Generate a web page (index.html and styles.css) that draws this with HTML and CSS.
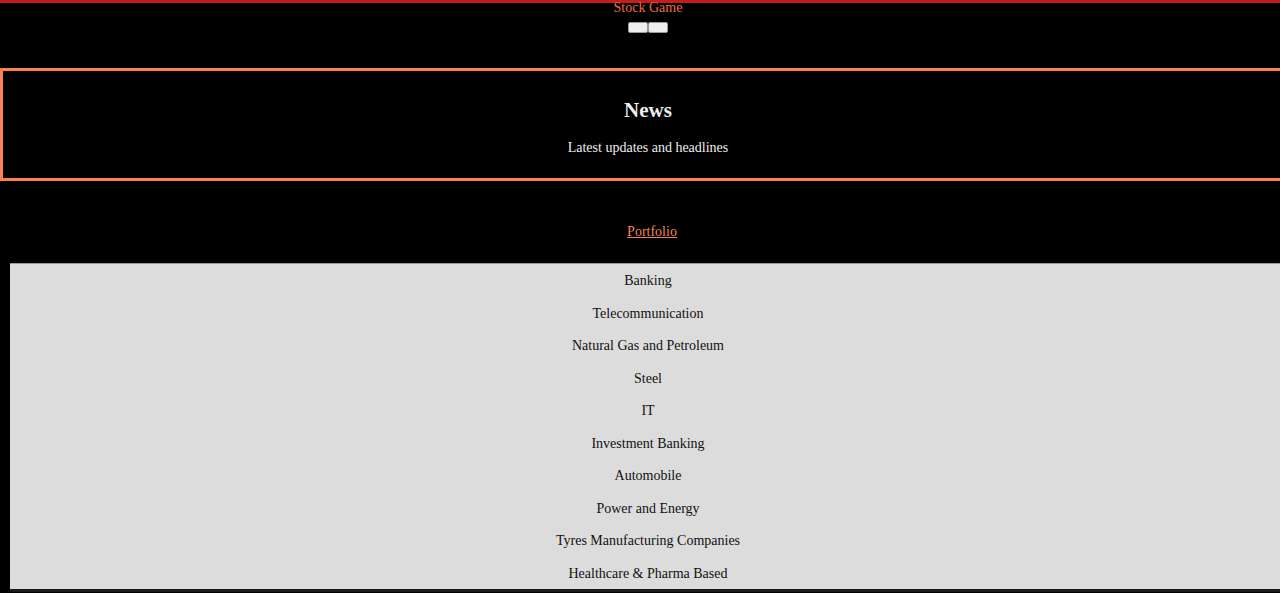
FILE: index.html
```html
<!DOCTYPE html>
<html lang="en">
<head>
<meta charset="utf-8">
<title>Stock Game</title>
<link rel="stylesheet" href="styles.css">
</head>
<body>
<div class="page">
  <header class="top">
    <div class="brand">Stock Game</div>
    <div class="controls">
      <button class="ctl" type="button"></button><button class="ctl" type="button"></button>
    </div>
  </header>
  <section class="news">
    <h2 class="news-title">News</h2>
    <p class="news-sub">Latest updates and headlines</p>
  </section>
  <div class="portfolio-row"><a class="portfolio-link" href="#">Portfolio</a></div>
  <ul class="sectors">
    <li class="sector">Banking</li>
    <li class="sector">Telecommunication</li>
    <li class="sector">Natural Gas and Petroleum</li>
    <li class="sector">Steel</li>
    <li class="sector">IT</li>
    <li class="sector">Investment Banking</li>
    <li class="sector">Automobile</li>
    <li class="sector">Power and Energy</li>
    <li class="sector">Tyres Manufacturing Companies</li>
    <li class="sector">Healthcare &amp; Pharma Based</li>
  </ul>
</div>
</body>
</html>
```

FILE: styles.css
```css
html, body {
  margin: 0;
  padding: 0;
  background: #000;
  overflow: hidden;
}
body {
  font-family: "Liberation Serif", "Times New Roman", serif;
  font-size: 14px;
}
.page {
  width: 1296px;
}
.top {
  height: 68px;
  box-shadow: inset 0 3px 0 #c41d1a;
  text-align: center;
}
.brand {
  color: #ee6a45;
  font-size: 14px;
  line-height: 16px;
}
.controls {
  margin-top: 6px;
  display: flex;
  justify-content: center;
}
.ctl {
  width: 20px;
  height: 11px;
  padding: 0;
  margin: 0;
  background: #efefef;
  border: 1px solid #9a9a9a;
  border-radius: 2px;
}
.news {
  border: 3px solid #ff7f50;
  padding: 27px 0 22px;
  text-align: center;
  color: #eeeeee;
}
.news-title {
  margin: 0 0 18px;
  font-size: 21px;
  line-height: 24px;
  font-weight: bold;
}
.news-sub {
  margin: 0;
  font-size: 14px;
  line-height: 16px;
}
.portfolio-row {
  margin-top: 43px;
  text-align: center;
  line-height: 16px;
  padding-left: 8px;
}
.portfolio-link {
  color: #f2835c;
  text-decoration: underline;
}
.sectors {
  list-style: none;
  margin: 23px 0 0 10px;
  padding: 0;
  width: 1276px;
  background: #dcdcdc;
  border-top: 1px solid #9a9a9a;
  border-bottom: 3px solid #1a1a1a;
}
.sector {
  text-align: center;
  color: #111;
  font-size: 14px;
  line-height: 16.5px;
  padding: 9px 0 7px;
}
```
